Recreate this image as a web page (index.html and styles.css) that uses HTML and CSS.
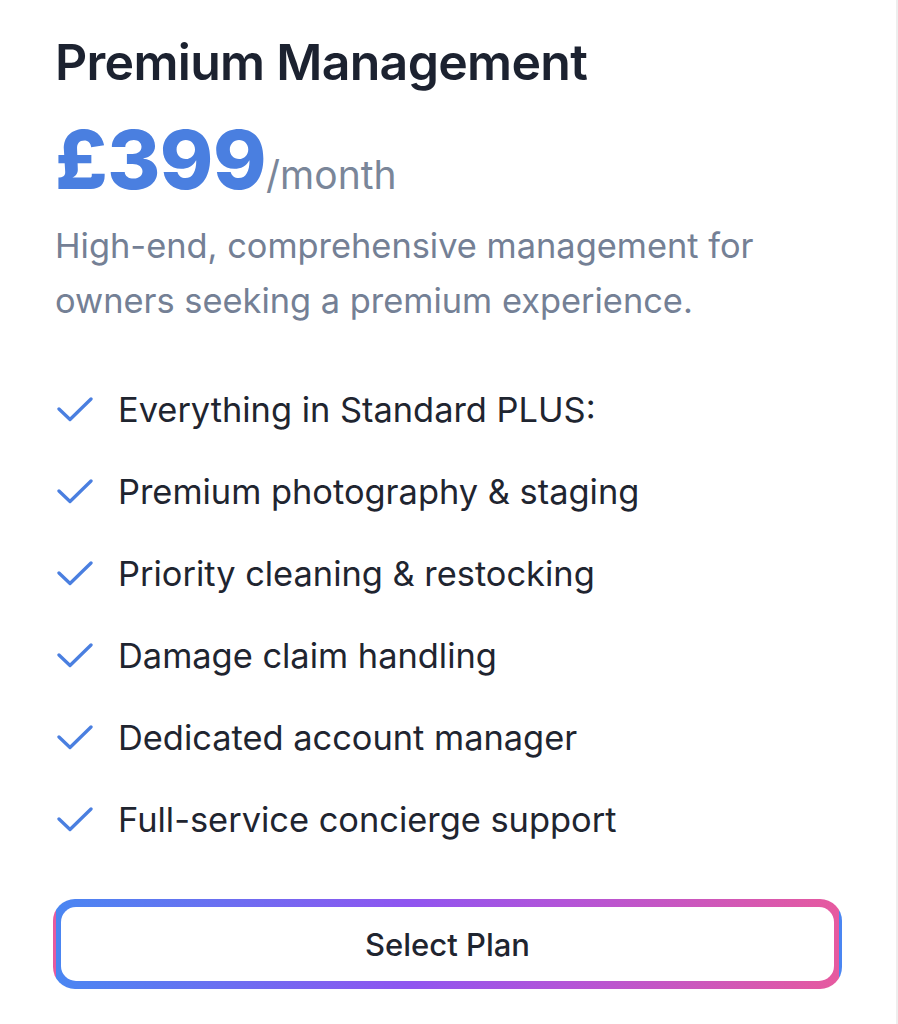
FILE: index.html
```html
<!DOCTYPE html>
<html>
<head>
<meta charset="utf-8">
<link rel="stylesheet" href="styles.css">
</head>
<body>
<div class="page">
  <div class="card">
    <h1 class="title">Premium Management</h1>
    <div class="price"><span class="amount">£399</span><span class="period">/month</span></div>
    <p class="desc">High-end, comprehensive management for owners seeking a premium experience.</p>
    <ul class="features">
      <li><svg class="check" viewBox="0 0 36 26"><path d="M2 13L13 23.5L34 3"/></svg><span>Everything in Standard PLUS:</span></li>
      <li><svg class="check" viewBox="0 0 36 26"><path d="M2 13L13 23.5L34 3"/></svg><span>Premium photography &amp; staging</span></li>
      <li><svg class="check" viewBox="0 0 36 26"><path d="M2 13L13 23.5L34 3"/></svg><span>Priority cleaning &amp; restocking</span></li>
      <li><svg class="check" viewBox="0 0 36 26"><path d="M2 13L13 23.5L34 3"/></svg><span>Damage claim handling</span></li>
      <li><svg class="check" viewBox="0 0 36 26"><path d="M2 13L13 23.5L34 3"/></svg><span>Dedicated account manager</span></li>
      <li><svg class="check" viewBox="0 0 36 26"><path d="M2 13L13 23.5L34 3"/></svg><span>Full-service concierge support</span></li>
    </ul>
    <button class="select"><span class="select-inner">Select Plan</span></button>
  </div>
</div>
</body>
</html>
```
FILE: styles.css
```css
html, body {
  margin: 0;
  padding: 0;
  background: #ffffff;
}
.page {
  width: 898px;
  height: 1024px;
  box-sizing: border-box;
  border-right: 2px solid #eeeeee;
  overflow: hidden;
}
.card {
  padding: 27px 55px 0 55px;
  font-family: Inter, "Noto Sans", sans-serif;
}
.title {
  margin: 0;
  font-size: 50px;
  font-weight: 600;
  color: #1c2230;
  letter-spacing: -0.7px;
  line-height: 70px;
}
.price {
  display: flex;
  align-items: baseline;
  margin-top: 22px;
  line-height: 82px;
}
.amount {
  font-size: 81px;
  font-weight: 800;
  color: #4a7fe0;
  letter-spacing: -0.5px;
}
.period {
  font-size: 39px;
  color: #7a8699;
  font-weight: 400;
}
.desc {
  margin: 2px 0 0 0;
  font-size: 34.4px;
  line-height: 55px;
  color: #748095;
  width: 760px;
}
.features {
  list-style: none;
  padding: 0;
  margin: 40px 0 0 0;
}
.features li {
  display: flex;
  align-items: center;
  height: 82px;
  font-size: 34.4px;
  color: #1f2530;
}
.check {
  width: 36px;
  height: 26px;
  margin-left: 2px;
  margin-right: 25px;
  fill: none;
  stroke: #4a7fe0;
  stroke-width: 3.3;
  stroke-linecap: round;
  stroke-linejoin: round;
}
.select {
  display: block;
  box-sizing: border-box;
  margin-top: 39px;
  margin-left: -2px;
  width: 789px;
  height: 90px;
  padding: 5px;
  border: 3px solid transparent;
  border-radius: 22px;
  background-image: linear-gradient(90deg, #4a86f2, #8f55f0 45%, #b354d8 65%, #e65a9f);
  background-origin: padding-box;
  background-clip: border-box;
  font-family: Inter, "Noto Sans", sans-serif;
  font-size: 31px;
  font-weight: 500;
  color: #1f2530;
}
.select-inner {
  display: flex;
  align-items: center;
  justify-content: center;
  height: 100%;
  background: #ffffff;
  border-radius: 15px;
}
```
